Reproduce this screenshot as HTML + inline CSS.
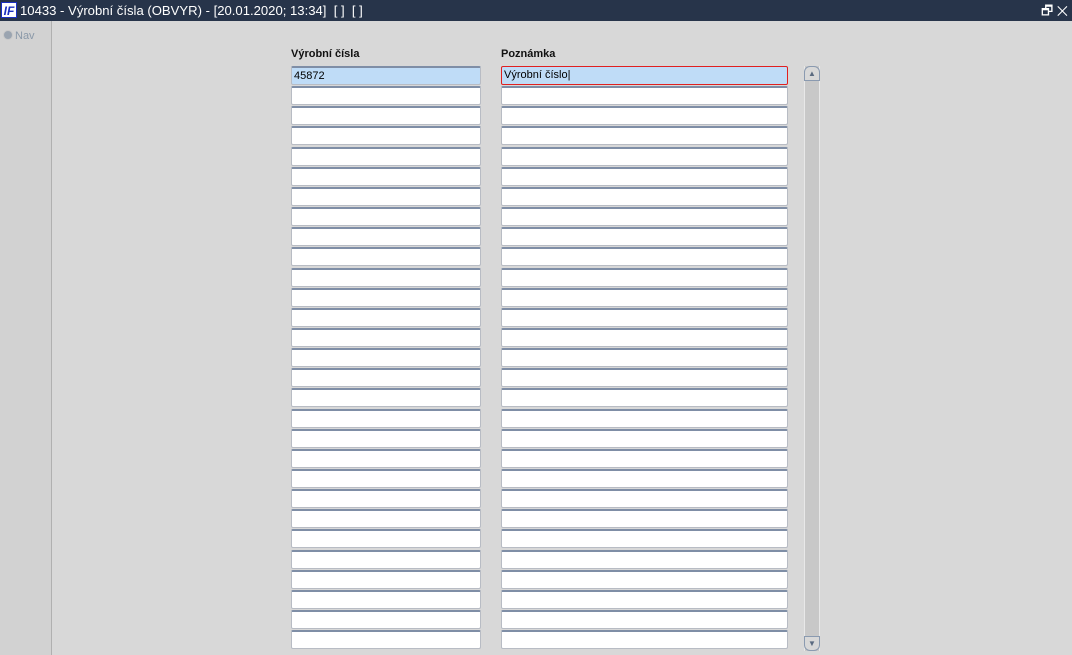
<!DOCTYPE html>
<html><head><meta charset="utf-8"><style>
body{margin:0;width:1072px;height:655px;overflow:hidden;background:#d8d8d8;font-family:"Liberation Sans",sans-serif;position:relative}
.title{position:absolute;left:0;top:0;width:1072px;height:21px;background:#27344a;color:#fff;font-size:13.1px;line-height:21px}
.logo{position:absolute;left:1px;top:2px;width:16px;height:16px;background:#fff;color:#1a2fc0;font-weight:bold;font-style:italic;font-size:12px;line-height:16px;text-align:center;border:1px solid #1a2fc0;box-sizing:border-box}
.side{position:absolute;left:0;top:21px;width:51px;height:634px;background:#d2d2d2;border-right:1px solid #b0b0b0}
.nav{position:absolute;left:3px;top:30px;font-size:11px;color:#8a98a8}
.nav i{display:inline-block;width:8px;height:8px;border-radius:50%;background:#9aa4b0;border:1px solid #c8c8c8;vertical-align:-1px;margin-right:2px}
.lbl{position:absolute;top:48px;font-size:11px;font-weight:bold;color:#111}
.f{position:absolute;height:19px;box-sizing:border-box;background:#fff;border:1px solid #b8bcc4;border-top:2px solid #7f8ea6;border-radius:2px;font-size:11px;line-height:16px;padding-left:2px;color:#000}
.sb{position:absolute;left:804px;top:66px;width:16px;height:585px;background:#c8c8c8;border-left:1px solid #e8e8e8;border-right:1px solid #e8e8e8;box-sizing:border-box}
.btn{position:absolute;left:804px;width:16px;height:15px;background:#d8d8d8;border:1px solid #8a9ab0;box-sizing:border-box;color:#5a6a80;font-size:8px;text-align:center;line-height:13px}
</style></head><body>
<div class="title"><div class="logo">IF</div><span style="position:absolute;left:20px">10433 - Výrobní čísla (OBVYR) - [20.01.2020; 13:34]&nbsp; [ ]&nbsp; [ ]</span>
<span style="position:absolute;right:4px;top:0;font-size:13px">🗗 ✕</span></div>
<div class="side"></div>
<div class="nav"><i></i>Nav</div>
<div class="lbl" style="left:291px">Výrobní čísla</div>
<div class="lbl" style="left:501px">Poznámka</div>
<div id="rows"></div>
<div class="sb"></div>
<div class="btn" style="top:66px;border-radius:6px 6px 0 0">▲</div>
<div class="btn" style="top:636px;border-radius:0 0 6px 6px">▼</div>
<script>
var h='';for(var i=0;i<29;i++){var y=Math.round(66+i*20.15);
var a=i==0?'background:#bfdcf7;':'';var b=i==0?'background:#bfdcf7;border:1px solid #e02020;':'';
h+='<div class="f" style="left:291px;top:'+y+'px;width:190px;'+a+'">'+(i==0?'45872':'')+'</div>';
h+='<div class="f" style="left:501px;top:'+y+'px;width:287px;'+b+'">'+(i==0?'Výrobní číslo|':'')+'</div>';}
document.getElementById('rows').innerHTML=h;
</script>
</body></html>
